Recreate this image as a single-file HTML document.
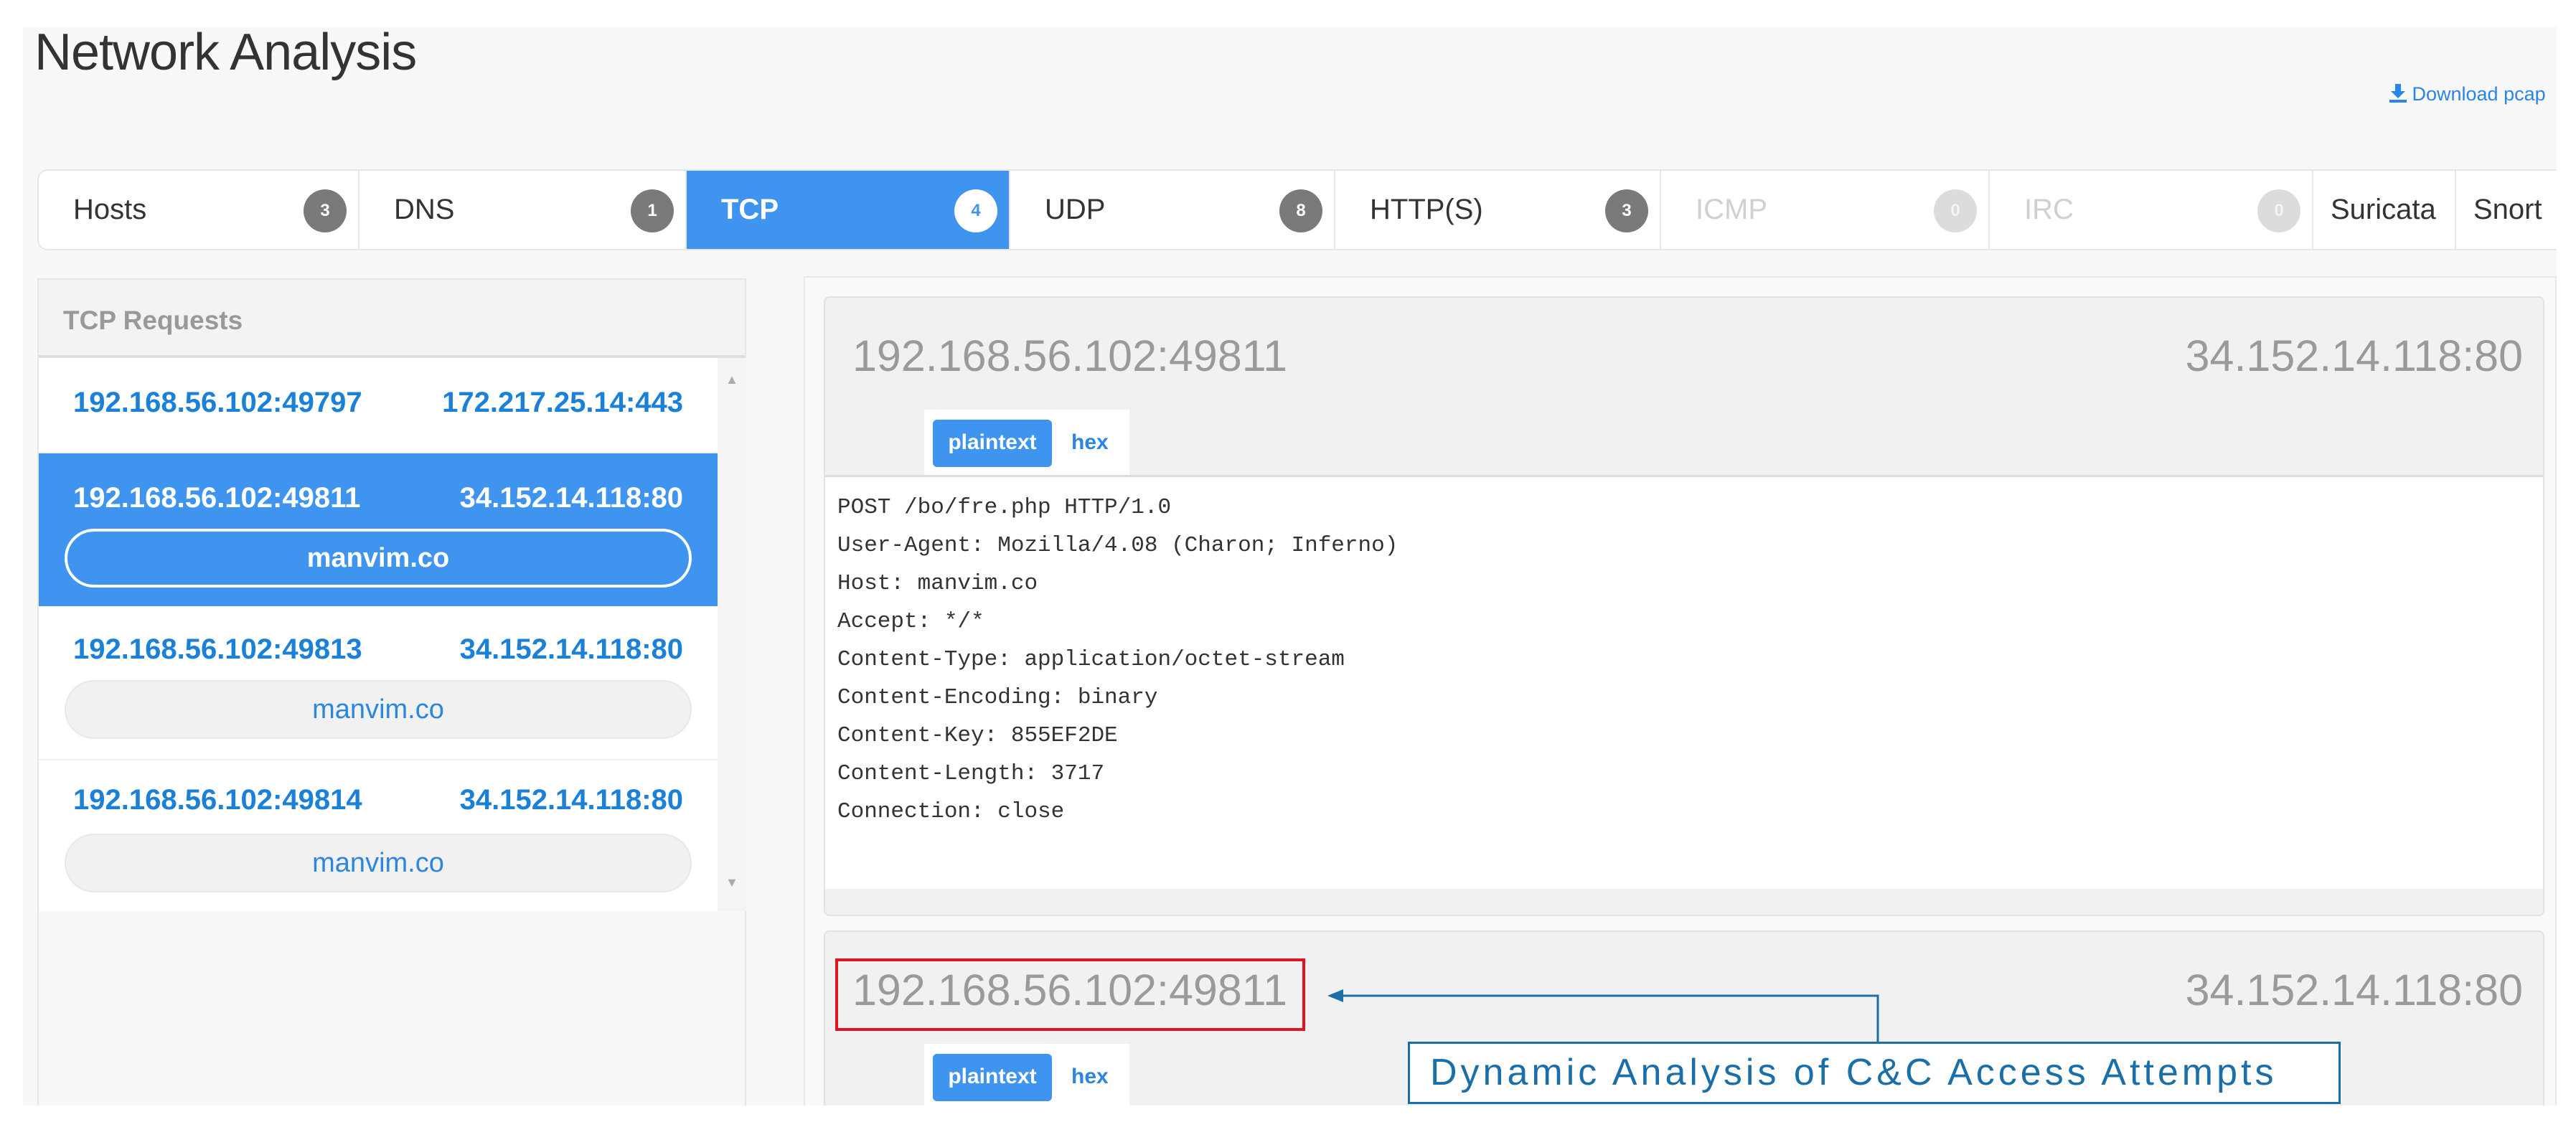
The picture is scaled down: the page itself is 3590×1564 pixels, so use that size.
<!DOCTYPE html>
<html><head><meta charset="utf-8"><style>
*{box-sizing:border-box;margin:0;padding:0}
body{width:3590px;height:1564px;background:#fff;position:relative;overflow:hidden;font-family:"Liberation Sans",sans-serif}
.abs{position:absolute}
#bg{left:32px;top:38px;width:3531px;height:1503px;background:#f8f8f8}
h1{position:absolute;left:48px;top:32px;font-size:72px;font-weight:normal;color:#333;letter-spacing:-1px}
.dl{left:3330px;top:116px;font-size:27px;color:#2a85e8;white-space:nowrap;width:233px;overflow:hidden}
.tabs{left:52px;top:236px;width:3511px;height:113px;background:#fff;border:2px solid #e6e6e6;border-right:none;border-radius:14px 0 0 14px;overflow:hidden}
.tab{position:absolute;top:0;height:113px;border-right:2px solid #e8e8e8;font-size:40px;color:#333;line-height:109px;padding-left:48px}
.tab .b{position:absolute;right:16px;top:26px;width:60px;height:60px;border-radius:50%;background:#7a7a7a;color:#fff;font-size:24px;font-weight:bold;line-height:60px;text-align:center;padding:0}
.tab.act{background:#3f94f0;color:#fff;font-weight:bold}
.tab.act .b{background:#fff;color:#3f94f0}
.tab.dis{color:#d0d0d0}
.tab.dis .b{background:#dcdcdc;color:#f4f4f4}
.lp{left:52px;top:388px;width:988px;height:1153px;border:2px solid #e6e6e6;border-bottom:none;background:#f8f8f8}
.lph{height:109px;background:#f3f3f3;border-bottom:4px solid #dedede;font-size:37px;color:#999;padding:36px 0 0 34px;font-weight:bold}
.list{position:absolute;left:0;top:109px;width:946px;height:771px;background:#fff}
.sb{position:absolute;left:946px;top:109px;width:40px;height:771px;background:#f4f4f4;color:#aaa;font-size:18px;text-align:center}
.item{position:absolute;left:0;width:946px;border-bottom:2px solid #eee}
.ip{position:absolute;top:40px;font-size:40px;font-weight:bold;color:#1b80d8}
.pill{position:absolute;left:36px;width:874px;height:82px;border-radius:41px;background:#f1f1f1;border:2px solid #e8e8e8;text-align:center;line-height:78px;font-size:38px;color:#2a86e0}
.rp{left:1120px;top:385px;width:2443px;height:1156px;border:2px solid #e8e8e8;border-bottom:none;background:#f9f9f9;overflow:hidden}
.card{position:absolute;left:26px;width:2398px;border:2px solid #e2e2e2;border-radius:8px;background:#f1f1f1}
.hip{position:absolute;top:46px;font-size:61px;color:#9a9a9a;letter-spacing:0}
.ptab{position:absolute;left:138px;top:156px;width:286px;height:95px;background:#fff}
.pbtn{position:absolute;left:12px;top:14px;width:166px;height:66px;background:#3f94f0;color:#fff;border-radius:6px;font-size:30px;font-weight:bold;text-align:center;line-height:64px}
.hex{position:absolute;left:205px;top:14px;line-height:64px;font-size:30px;color:#2a86e0;font-weight:bold}
pre{position:absolute;left:0;top:247px;width:2394px;height:577px;background:#fff;border-top:3px solid #ddd;font-family:"Liberation Mono",monospace;font-size:31px;line-height:53px;color:#333;padding:16px 0 0 17px}
</style></head><body>
<div id="bg" class="abs"></div>
<h1>Network Analysis</h1>
<div class="abs dl"><svg width="24" height="26" viewBox="0 0 24 26" style="vertical-align:-3px"><path d="M8 0h8v10h6l-10 10L2 10h6z M0 22h24v4H0z" fill="#2a85e8"/></svg> Download pcap</div>
<div class="abs tabs">
 <div class="tab" style="left:0;width:447px">Hosts<span class="b">3</span></div>
 <div class="tab" style="left:447px;width:456px">DNS<span class="b">1</span></div>
 <div class="tab act" style="left:903px;width:451px">TCP<span class="b">4</span></div>
 <div class="tab" style="left:1354px;width:453px">UDP<span class="b">8</span></div>
 <div class="tab" style="left:1807px;width:454px">HTTP(S)<span class="b">3</span></div>
 <div class="tab dis" style="left:2261px;width:458px">ICMP<span class="b">0</span></div>
 <div class="tab dis" style="left:2719px;width:451px">IRC<span class="b">0</span></div>
 <div class="tab" style="left:3170px;width:199px;padding-left:24px">Suricata</div>
 <div class="tab" style="left:3369px;width:200px;padding-left:24px">Snort</div>
</div>
<div class="abs lp">
 <div class="lph">TCP Requests</div>
 <div class="list">
  <div class="item" style="top:0;height:133px"><span class="ip" style="left:48px">192.168.56.102:49797</span><span class="ip" style="right:48px">172.217.25.14:443</span></div>
  <div class="item" style="top:133px;height:213px;background:#3f94f0;border:none"><span class="ip" style="left:48px;color:#fff">192.168.56.102:49811</span><span class="ip" style="right:48px;color:#fff">34.152.14.118:80</span><div class="pill" style="top:105px;background:#3f94f0;border:4px solid #fff;color:#fff;font-weight:bold;line-height:74px">manvim.co</div></div>
  <div class="item" style="top:346px;height:215px"><span class="ip" style="left:48px;top:38px">192.168.56.102:49813</span><span class="ip" style="right:48px;top:38px">34.152.14.118:80</span><div class="pill" style="top:103px">manvim.co</div></div>
  <div class="item" style="top:561px;height:210px;border:none"><span class="ip" style="left:48px;top:33px">192.168.56.102:49814</span><span class="ip" style="right:48px;top:33px">34.152.14.118:80</span><div class="pill" style="top:102px">manvim.co</div></div>
 </div>
 <div class="sb"><div style="margin-top:20px">&#9650;</div><div style="margin-top:680px">&#9660;</div></div>
</div>
<div class="abs rp">
 <div class="card" style="top:26px;height:864px">
  <span class="hip" style="left:38px">192.168.56.102:49811</span><span class="hip" style="right:28px">34.152.14.118:80</span>
  <div class="ptab"><div class="pbtn">plaintext</div><div class="hex">hex</div></div>
<pre>POST /bo/fre.php HTTP/1.0
User-Agent: Mozilla/4.08 (Charon; Inferno)
Host: manvim.co
Accept: */*
Content-Type: application/octet-stream
Content-Encoding: binary
Content-Key: 855EF2DE
Content-Length: 3717
Connection: close</pre>
 </div>
 <div class="card" style="top:910px;height:300px">
  <span class="hip" style="left:38px">192.168.56.102:49811</span><span class="hip" style="right:28px">34.152.14.118:80</span>
  <div class="ptab"><div class="pbtn">plaintext</div><div class="hex">hex</div></div>
 </div>
</div>
<div class="abs" style="left:1164px;top:1336px;width:655px;height:101px;border:4px solid #e0141e"></div>
<svg class="abs" style="left:0;top:0" width="3590" height="1564">
 <polyline points="1862,1388 2617,1388 2617,1452" fill="none" stroke="#1a6fa8" stroke-width="3"/>
 <polygon points="1850,1388 1872,1379 1872,1397" fill="#1a6fa8"/>
</svg>
<div class="abs" style="left:1962px;top:1452px;width:1300px;height:87px;border:3px solid #1a6fa8;background:#fff;color:#1a6fa8;font-size:52px;line-height:80px;padding-left:28px;letter-spacing:5px;white-space:nowrap;overflow:hidden">Dynamic Analysis of C&amp;C Access Attempts</div>
</body></html>
